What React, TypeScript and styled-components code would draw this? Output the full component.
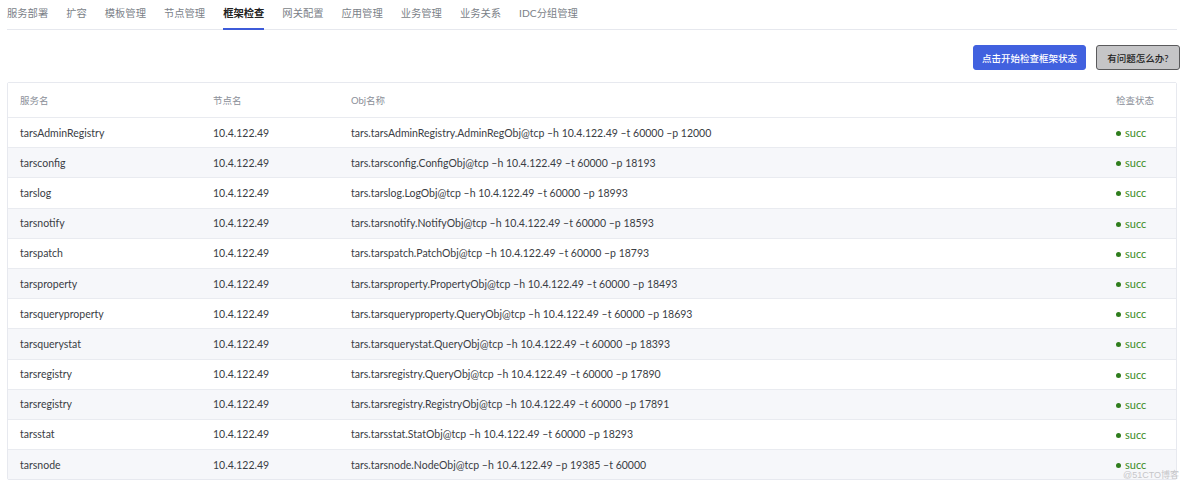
import React from 'react';
import styled, { createGlobalStyle } from 'styled-components';

const GlobalStyle = createGlobalStyle`
  html, body {
    margin: 0;
    padding: 0;
    background: #fff;
  }
  body {
    font-family: Lato, "Noto Sans CJK SC", sans-serif;
    color: #333;
  }
`;

const Page = styled.div`
  width: 1184px;
  height: 484px;
  padding: 0 7px;
  box-sizing: border-box;
  overflow: hidden;
  position: relative;
`;

const TabBar = styled.div`
  display: flex;
  gap: 18px;
  height: 30px;
  border-bottom: 1px solid #e6e8ee;
  box-sizing: border-box;
`;

const Tab = styled.div<{ $active?: boolean }>`
  font-size: 10.3px;
  line-height: 27px;
  color: ${p => (p.$active ? '#222' : '#7b7f88')};
  font-weight: ${p => (p.$active ? 700 : 400)};
  border-bottom: 2px solid ${p => (p.$active ? '#3d5bd9' : 'transparent')};
  margin-bottom: -1px;
  white-space: nowrap;
`;

const Toolbar = styled.div`
  display: flex;
  justify-content: flex-end;
  gap: 10px;
  padding-top: 15px;
  margin-right: -3px;
  height: 52px;
  box-sizing: border-box;
`;

const Button = styled.button<{ $primary?: boolean }>`
  height: 25px;
  padding: 0;
  font-family: Lato, "Noto Sans CJK SC", sans-serif;
  font-size: 9.5px;
  font-weight: 500;
  white-space: nowrap;
  border-radius: 3px;
  cursor: pointer;
  color: ${p => (p.$primary ? '#fff' : '#222')};
  background: ${p => (p.$primary ? '#4161df' : '#c5c5c7')};
  border: 1px solid ${p => (p.$primary ? '#4161df' : '#5a5a5c')};
  width: ${p => (p.$primary ? '113px' : '84px')};
`;

const Table = styled.div`
  border: 1px solid #e7e9ef;
  border-radius: 2px;
`;

const Row = styled.div<{ $head?: boolean; $striped?: boolean }>`
  display: grid;
  grid-template-columns: 193px 138px 765px 1fr;
  align-items: center;
  height: ${p => (p.$head ? '34px' : '30.2px')};
  background: ${p => (p.$striped ? '#f6f7fa' : '#fff')};
  border-top: ${p => (p.$head ? 'none' : '1px solid #e9ebf0')};
  box-sizing: border-box;
`;

const Cell = styled.div<{ $head?: boolean }>`
  padding-left: 12px;
  font-size: ${p => (p.$head ? '9.5px' : '10.5px')};
  color: ${p => (p.$head ? '#8b8f99' : '#3a3d44')};
  white-space: nowrap;
`;

const Status = styled.span`
  display: inline-flex;
  align-items: center;
  gap: 4px;
  color: #3a8c24;
  font-size: 11px;
  line-height: 12px;
  &::before {
    content: '';
    width: 5px;
    height: 5px;
    border-radius: 50%;
    background: #2f7d1c;
    margin-top: 1px;
  }
`;

const Watermark = styled.div`
  position: absolute;
  right: 5px;
  bottom: 3px;
  font-size: 9px;
  color: #c6c6c9;
  font-family: "Liberation Sans", "Noto Sans CJK SC", sans-serif;
`;

const tabs = ['服务部署', '扩容', '模板管理', '节点管理', '框架检查', '网关配置', '应用管理', '业务管理', '业务关系', 'IDC分组管理'];

const rows: [string, string][] = [
  ['tarsAdminRegistry', 'tars.tarsAdminRegistry.AdminRegObj@tcp –h 10.4.122.49 –t 60000 –p 12000'],
  ['tarsconfig', 'tars.tarsconfig.ConfigObj@tcp –h 10.4.122.49 –t 60000 –p 18193'],
  ['tarslog', 'tars.tarslog.LogObj@tcp –h 10.4.122.49 –t 60000 –p 18993'],
  ['tarsnotify', 'tars.tarsnotify.NotifyObj@tcp –h 10.4.122.49 –t 60000 –p 18593'],
  ['tarspatch', 'tars.tarspatch.PatchObj@tcp –h 10.4.122.49 –t 60000 –p 18793'],
  ['tarsproperty', 'tars.tarsproperty.PropertyObj@tcp –h 10.4.122.49 –t 60000 –p 18493'],
  ['tarsqueryproperty', 'tars.tarsqueryproperty.QueryObj@tcp –h 10.4.122.49 –t 60000 –p 18693'],
  ['tarsquerystat', 'tars.tarsquerystat.QueryObj@tcp –h 10.4.122.49 –t 60000 –p 18393'],
  ['tarsregistry', 'tars.tarsregistry.QueryObj@tcp –h 10.4.122.49 –t 60000 –p 17890'],
  ['tarsregistry', 'tars.tarsregistry.RegistryObj@tcp –h 10.4.122.49 –t 60000 –p 17891'],
  ['tarsstat', 'tars.tarsstat.StatObj@tcp –h 10.4.122.49 –t 60000 –p 18293'],
  ['tarsnode', 'tars.tarsnode.NodeObj@tcp –h 10.4.122.49 –p 19385 –t 60000'],
];

const App: React.FC = () => (
  <Page>
    <GlobalStyle />
    <TabBar>
      {tabs.map(t => (
        <Tab key={t} $active={t === '框架检查'}>{t}</Tab>
      ))}
    </TabBar>
    <Toolbar>
      <Button $primary>点击开始检查框架状态</Button>
      <Button>有问题怎么办?</Button>
    </Toolbar>
    <Table>
      <Row $head>
        <Cell $head>服务名</Cell>
        <Cell $head>节点名</Cell>
        <Cell $head>Obj名称</Cell>
        <Cell $head>检查状态</Cell>
      </Row>
      {rows.map(([name, obj], i) => (
        <Row key={i} $striped={i % 2 === 1}>
          <Cell>{name}</Cell>
          <Cell>10.4.122.49</Cell>
          <Cell>{obj}</Cell>
          <Cell><Status>succ</Status></Cell>
        </Row>
      ))}
    </Table>
    <Watermark>@51CTO博客</Watermark>
  </Page>
);

export default App;
